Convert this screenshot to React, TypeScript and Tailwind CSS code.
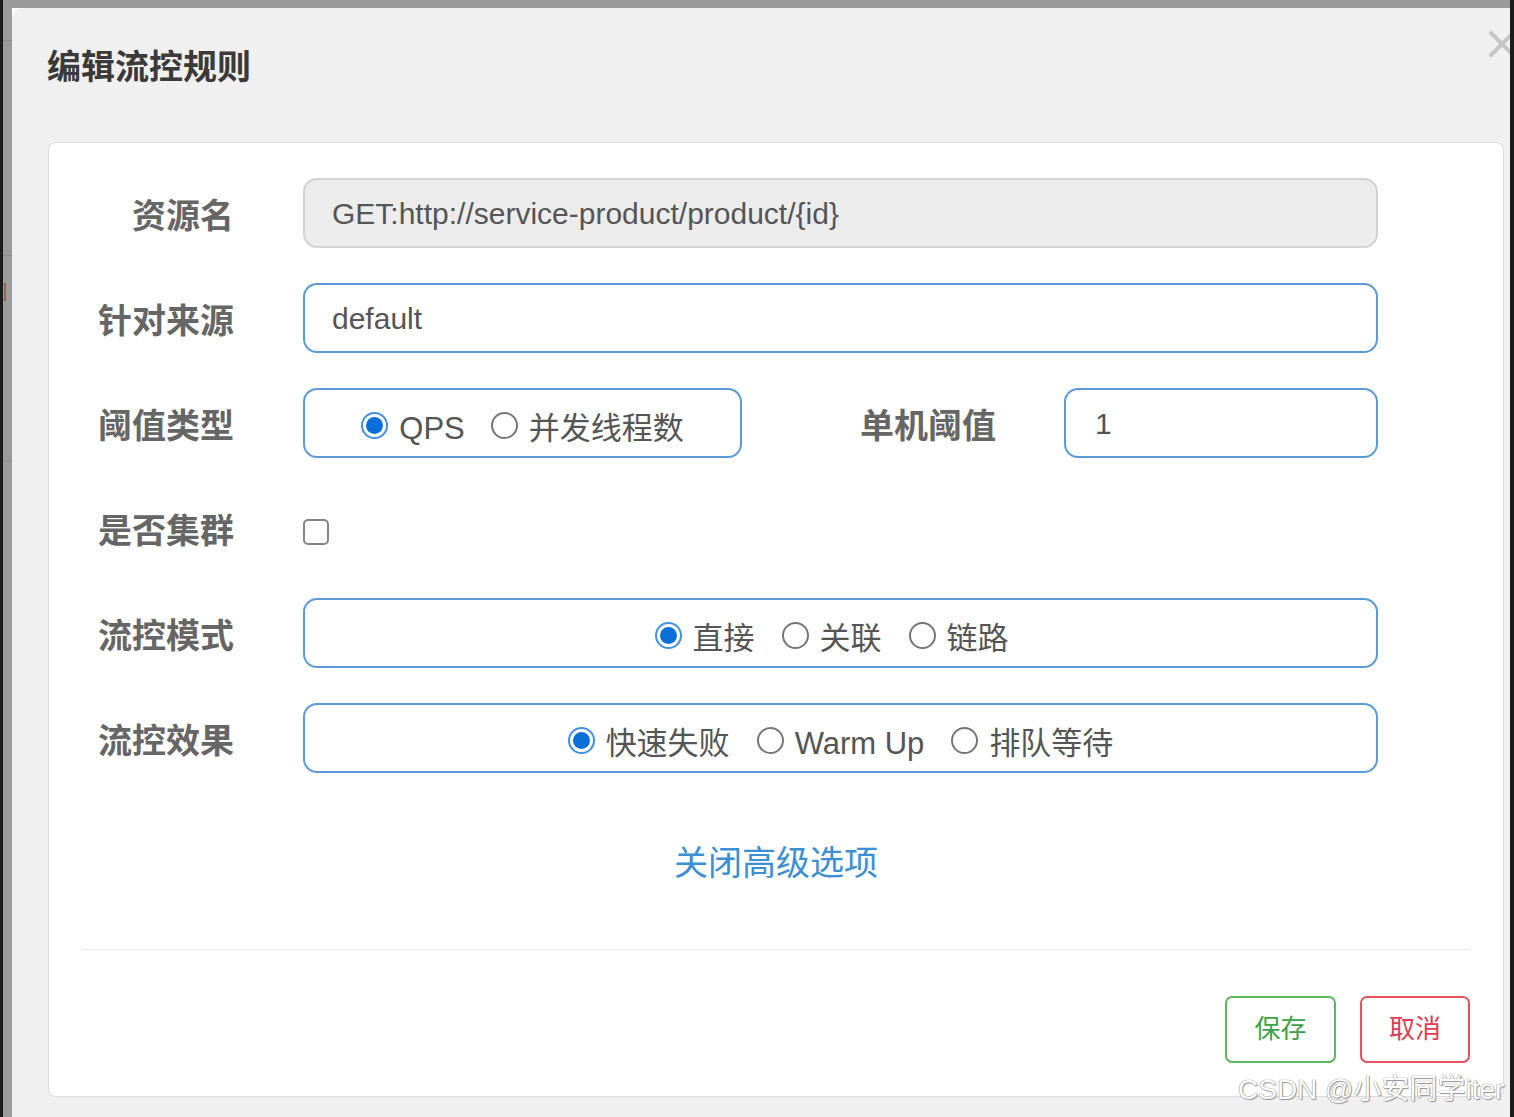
import React from "react";

const FONT = "font-['Liberation_Sans','Noto_Sans_CJK_SC',sans-serif]";

function Radio({ checked, label }: { checked?: boolean; label: string }) {
  return (
    <div className="flex items-center gap-[11px] pt-[5px]">
      {checked ? (
        <span className="flex h-[27px] w-[27px] items-center justify-center rounded-full border-[2px] border-[#3f90e6] bg-white">
          <span className="h-[17px] w-[17px] rounded-full bg-[#0b6fd8]" />
        </span>
      ) : (
        <span className="h-[27px] w-[27px] rounded-full border-[2px] border-[#767676] bg-white" />
      )}
      <span className="pt-[6px] text-[31px] leading-[36px] text-[#555]">{label}</span>
    </div>
  );
}

function Label({ children }: { children: React.ReactNode }) {
  return (
    <div className="w-[185px] shrink-0 pt-[5px] text-right text-[34px] font-bold leading-[40px] text-[#666]">
      {children}
    </div>
  );
}

export default function App() {
  return (
    <div className={`relative flex h-[1117px] w-[1514px] overflow-hidden ${FONT}`}>
      <div className="w-[3px] shrink-0 bg-[#1b1b1b]" />
      <div className="flex w-[9px] shrink-0 flex-col bg-[#9b9b9b]">
        <div className="h-[40px]" />
        <div className="h-[1px] bg-[#8a8a8a]" />
        <div className="h-[214px]" />
        <div className="h-[1px] bg-[#8a8a8a]" />
        <div className="h-[27px]" />
        <div className="ml-[1px] h-[18px] w-[2px] bg-[#8c6a55]" />
        <div className="h-[160px]" />
        <div className="h-[1px] bg-[#8a8a8a]" />
      </div>
      <div className="flex flex-1 flex-col">
        <div className="h-[8px] shrink-0 bg-[#9b9b9b]" />
        <div className="relative flex-1 overflow-hidden rounded-tl-[10px] bg-[#f0f0f0]">
          <svg
            className="absolute left-[1476px] top-[22px]"
            width="28"
            height="28"
            viewBox="0 0 28 28"
          >
            <path d="M3 3 L25 25 M25 3 L3 25" stroke="#c4c4c4" strokeWidth="4" strokeLinecap="round" />
          </svg>
          <div className="pl-[35px] pt-[39px] text-[34px] font-bold leading-[40px] text-[#3a3a3a]">
            编辑流控规则
          </div>
          <div className="ml-[36px] mt-[55px] w-[1456px] rounded-[8px] border border-[#dcdcdc] bg-white pt-[35px] pb-[33px]">
            <div className="flex flex-col gap-[35px]">
              <div className="flex h-[70px] items-center">
                <Label>资源名</Label>
                <div className="ml-[69px] flex h-[70px] w-[1075px] items-center rounded-[14px] border-2 border-[#d2d2d2] bg-[#ececec] px-[27px] text-[30px] text-[#555]">
                  GET:http://service-product/product/{"{id}"}
                </div>
              </div>
              <div className="flex h-[70px] items-center">
                <Label>针对来源</Label>
                <div className="ml-[69px] flex h-[70px] w-[1075px] items-center rounded-[14px] border-2 border-[#5d9bd6] bg-white px-[27px] text-[30px] text-[#555]">
                  default
                </div>
              </div>
              <div className="flex h-[70px] items-center">
                <Label>阈值类型</Label>
                <div className="ml-[69px] flex w-[1075px] items-center">
                  <div className="flex h-[70px] w-[439px] items-center justify-center gap-[26px] rounded-[14px] border-2 border-[#5d9bd6]">
                    <Radio checked label="QPS" />
                    <Radio label="并发线程数" />
                  </div>
                  <div className="ml-[118px] w-[137px] pt-[5px] text-[34px] font-bold leading-[40px] text-[#666]">
                    单机阈值
                  </div>
                  <div className="ml-[67px] flex h-[70px] w-[314px] items-center rounded-[14px] border-2 border-[#5d9bd6] px-[29px] text-[30px] text-[#555]">
                    1
                  </div>
                </div>
              </div>
              <div className="flex h-[70px] items-center">
                <Label>是否集群</Label>
                <div className="ml-[69px] mt-[8px] h-[26px] w-[26px] rounded-[5px] border-[2px] border-[#858585] bg-white" />
              </div>
              <div className="flex h-[70px] items-center">
                <Label>流控模式</Label>
                <div className="ml-[69px] flex h-[70px] w-[1075px] items-center justify-center gap-[27px] rounded-[14px] border-2 border-[#5d9bd6] pr-[18px]">
                  <Radio checked label="直接" />
                  <Radio label="关联" />
                  <Radio label="链路" />
                </div>
              </div>
              <div className="flex h-[70px] items-center">
                <Label>流控效果</Label>
                <div className="ml-[69px] flex h-[70px] w-[1075px] items-center justify-center gap-[27px] rounded-[14px] border-2 border-[#5d9bd6]">
                  <Radio checked label="快速失败" />
                  <Radio label="Warm Up" />
                  <Radio label="排队等待" />
                </div>
              </div>
            </div>
            <div className="mt-[70px] text-center text-[34px] leading-[40px] text-[#3b8fd3]">
              关闭高级选项
            </div>
            <div className="mx-[34px] mt-[66px] h-[1px] bg-[#e6e6e6]" />
            <div className="mr-[33px] mt-[46px] flex justify-end gap-[24px]">
              <div className="flex h-[67px] w-[111px] items-center justify-center rounded-[7px] border-2 border-[#5cb85c] text-[26px] text-[#3aa348]">
                保存
              </div>
              <div className="flex h-[67px] w-[110px] items-center justify-center rounded-[7px] border-2 border-[#e4525f] text-[26px] text-[#e03c52]">
                取消
              </div>
            </div>
          </div>
        </div>
      </div>
      <div className="w-[4px] shrink-0 bg-[#1b1b1b]" />
      <div className="absolute left-[1238px] top-[1072px] whitespace-nowrap text-[28px] leading-[36px] text-white [text-shadow:0_0_1px_#888,0_0_1px_#888,1px_1px_1px_#999]">
        CSDN @小安同学iter
      </div>
    </div>
  );
}
